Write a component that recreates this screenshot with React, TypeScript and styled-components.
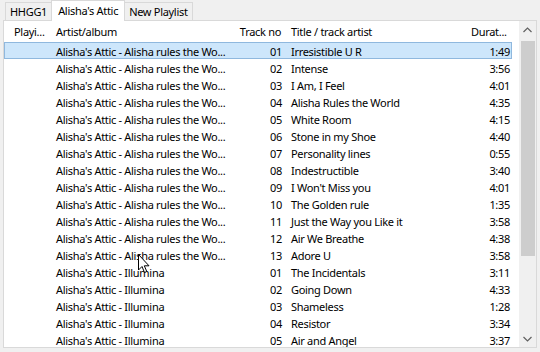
import React from "react";
import styled, { createGlobalStyle } from "styled-components";

const GlobalStyle = createGlobalStyle`
  html, body { margin: 0; padding: 0; background: #f0f0f0; }
  body {
    font-family: "Noto Sans", "Open Sans", sans-serif;
    font-size: 11px;
    letter-spacing: -0.3px;
    color: #000;
  }
`;

const COLS = "46px 181px 55px 180px 46px";

const Page = styled.div`
  position: relative;
  width: 540px;
  height: 352px;
  background: #f0f0f0;
  display: flex;
  flex-direction: column;
  overflow: hidden;
`;

const TabStrip = styled.div`
  display: flex;
  align-items: flex-end;
  height: 20px;
  padding-left: 5px;
  position: relative;
  z-index: 2;
`;

const Tab = styled.div<{ $active?: boolean }>`
  box-sizing: border-box;
  height: ${(p) => (p.$active ? "21px" : "18px")};
  margin-bottom: ${(p) => (p.$active ? "-1px" : "0")};
  padding: ${(p) => (p.$active ? "0 6px 2px" : "0 4px")};
  border: 1px solid #d9d9d9;
  border-bottom: none;
  background: ${(p) => (p.$active ? "#ffffff" : "#f0f0f0")};
  display: flex;
  align-items: center;
  white-space: nowrap;
  & + & { margin-left: -1px; }
`;

const Panel = styled.div`
  box-sizing: border-box;
  margin: 0 3px;
  height: 328px;
  border: 1px solid #d9d9d9;
  background: #ffffff;
  display: flex;
  position: relative;
  z-index: 1;
`;

const List = styled.div`
  flex: 1;
  overflow: hidden;
`;

const HeaderRow = styled.div`
  display: grid;
  grid-template-columns: ${COLS};
  height: 21px;
  align-items: center;
`;

const Row = styled.div<{ $selected?: boolean }>`
  box-sizing: border-box;
  display: grid;
  grid-template-columns: ${COLS};
  width: 508px;
  height: 17px;
  align-items: start;
  border: 1px solid ${(p) => (p.$selected ? "#8fb8de" : "transparent")};
  background: ${(p) => (p.$selected ? "#cde6fb" : "transparent")};
`;

const Cell = styled.div<{ $align?: "left" | "right"; $pl?: number; $pr?: number; $pt?: number }>`
  text-align: ${(p) => p.$align ?? "left"};
  padding-left: ${(p) => p.$pl ?? 5}px;
  padding-right: ${(p) => p.$pr ?? 4}px;
  padding-top: ${(p) => p.$pt ?? 2}px;
  white-space: nowrap;
  overflow: hidden;
  line-height: 14px;
`;

const ScrollBar = styled.div`
  width: 17px;
  background: #f0f0f0;
  display: flex;
  flex-direction: column;
`;

const ArrowBtn = styled.div`
  height: 17px;
  display: flex;
  align-items: center;
  justify-content: center;
`;

const Track = styled.div`
  flex: 1;
  padding-top: 3px;
`;

const Thumb = styled.div`
  margin: 0 1px 0 2px;
  height: 215px;
  background: #cdcdcd;
`;

const Cursor = styled.svg`
  position: absolute;
  left: 138px;
  top: 254px;
  z-index: 5;
`;

const ALBUM1 = "Alisha's Attic - Alisha rules the Wo...";
const ALBUM2 = "Alisha's Attic - Illumina";

const tracks: [string, string, string, string][] = [
  [ALBUM1, "01", "Irresistible U R", "1:49"],
  [ALBUM1, "02", "Intense", "3:56"],
  [ALBUM1, "03", "I Am, I Feel", "4:01"],
  [ALBUM1, "04", "Alisha Rules the World", "4:35"],
  [ALBUM1, "05", "White Room", "4:15"],
  [ALBUM1, "06", "Stone in my Shoe", "4:40"],
  [ALBUM1, "07", "Personality lines", "0:55"],
  [ALBUM1, "08", "Indestructible", "3:40"],
  [ALBUM1, "09", "I Won't Miss you", "4:01"],
  [ALBUM1, "10", "The Golden rule", "1:35"],
  [ALBUM1, "11", "Just the Way you Like it", "3:58"],
  [ALBUM1, "12", "Air We Breathe", "4:38"],
  [ALBUM1, "13", "Adore U", "3:58"],
  [ALBUM2, "01", "The Incidentals", "3:11"],
  [ALBUM2, "02", "Going Down", "4:33"],
  [ALBUM2, "03", "Shameless", "1:28"],
  [ALBUM2, "04", "Resistor", "3:34"],
  [ALBUM2, "05", "Air and Angel", "3:37"],
];

export default function App() {
  return (
    <Page>
      <GlobalStyle />
      <TabStrip>
        <Tab>HHGG1</Tab>
        <Tab $active>Alisha's Attic</Tab>
        <Tab>New Playlist</Tab>
      </TabStrip>
      <Panel>
        <List>
          <HeaderRow>
            <Cell $pl={10} $pt={0}>Playi...</Cell>
            <Cell $pl={6} $pt={0}>Artist/album</Cell>
            <Cell $align="right" $pr={5} $pt={0}>Track no</Cell>
            <Cell $pl={5} $pt={0}>Title / track artist</Cell>
            <Cell $align="right" $pr={6} $pt={0}>Durat...</Cell>
          </HeaderRow>
          {tracks.map((t, i) => (
            <Row key={i} $selected={i === 0}>
              <Cell $pl={10}></Cell>
              <Cell $pl={5}>{t[0]}</Cell>
              <Cell $align="right" $pr={5}>{t[1]}</Cell>
              <Cell $pl={4}>{t[2]}</Cell>
              <Cell $align="right" $pr={3}>{t[3]}</Cell>
            </Row>
          ))}
        </List>
        <ScrollBar>
          <ArrowBtn>
            <svg width="9" height="6" viewBox="0 0 9 6">
              <polyline points="0.5,5 4.5,1 8.5,5" fill="none" stroke="#606060" strokeWidth="1.2" />
            </svg>
          </ArrowBtn>
          <Track>
            <Thumb />
          </Track>
          <ArrowBtn>
            <svg width="9" height="6" viewBox="0 0 9 6">
              <polyline points="0.5,1 4.5,5 8.5,1" fill="none" stroke="#606060" strokeWidth="1.2" />
            </svg>
          </ArrowBtn>
        </ScrollBar>
      </Panel>
      <Cursor width="13" height="20" viewBox="0 0 13 20">
        <path d="M0.5,0.5 L0.5,16 L4,12.5 L6.5,18.5 L8.8,17.5 L6.3,11.8 L11,11.8 Z" fill="#ffffff" stroke="#000000" strokeWidth="1" strokeLinejoin="miter" />
      </Cursor>
    </Page>
  );
}
